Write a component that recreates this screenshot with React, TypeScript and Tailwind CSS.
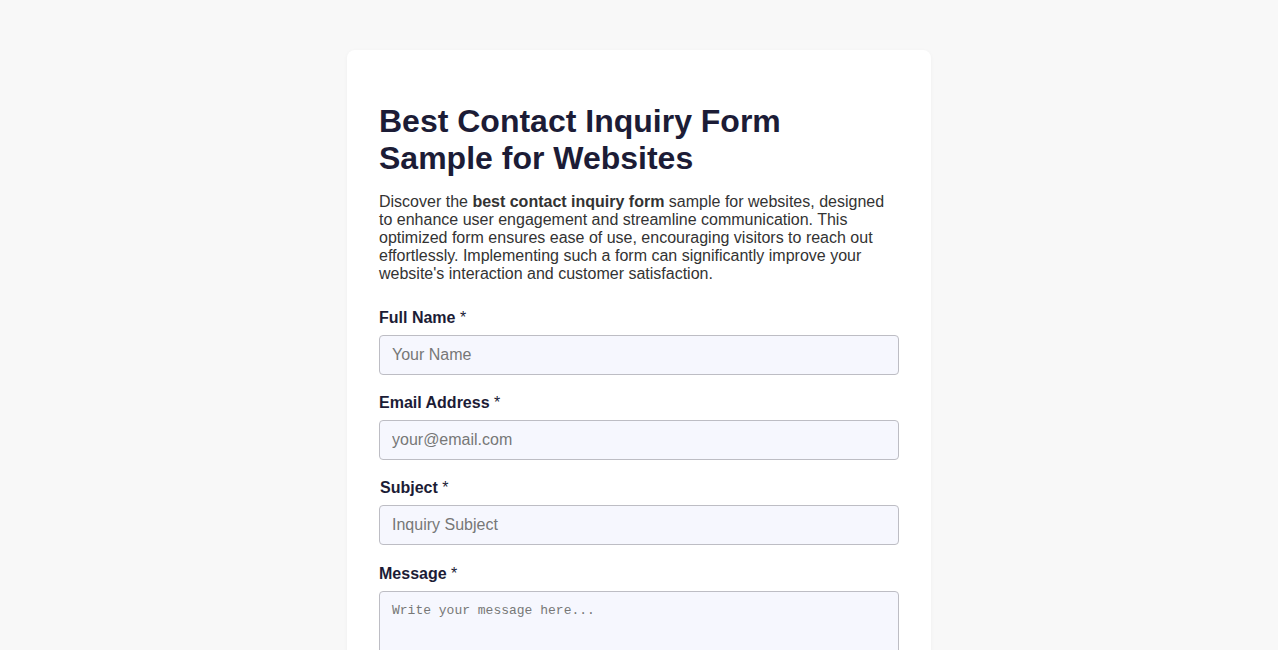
import React from "react";

const labelCls = "block text-[16px] font-bold text-[#1c1c36] leading-[18px] mb-[8px]";
const inputCls =
  "block w-full h-[40px] px-[12px] bg-[#f6f7fe] border border-[#bdbdc4] rounded-[4px] text-[16px] text-[#333] placeholder:text-[#777] outline-none";

function Req() {
  return <span className="font-normal"> *</span>;
}

export default function App() {
  return (
    <div
      className="min-h-screen bg-[#f8f8f8] flex justify-center pt-[50px]"
      style={{ fontFamily: '"Liberation Sans", Arial, sans-serif' }}
    >
      <div className="w-[584px] bg-white rounded-[8px] shadow-[0_1px_4px_rgba(0,0,0,0.04)] px-[32px] pt-[53px] pb-[40px] self-start">
        <h1 className="text-[32px] font-bold leading-[37px] text-[#1c1c36]">
          Best Contact Inquiry Form
          <br />
          Sample for Websites
        </h1>
        <p className="mt-[16px] text-[16px] leading-[18px] text-[#333]">
          Discover the <strong>best contact inquiry form</strong> sample for websites, designed to enhance user
          engagement and streamline communication. This optimized form ensures ease of use, encouraging visitors
          to reach out effortlessly. Implementing such a form can significantly improve your website's interaction
          and customer satisfaction.
        </p>
        <form className="mt-[26px] flex flex-col gap-[19px]">
          <div>
            <label className={labelCls}>
              Full Name<Req />
            </label>
            <input className={inputCls} placeholder="Your Name" />
          </div>
          <div>
            <label className={labelCls}>
              Email Address<Req />
            </label>
            <input className={inputCls} placeholder="your@email.com" />
          </div>
          <div>
            <label className={labelCls + " pl-[1px]"}>
              Subject<Req />
            </label>
            <input className={inputCls} placeholder="Inquiry Subject" />
          </div>
          <div className="mt-[1px]">
            <label className={labelCls}>
              Message<Req />
            </label>
            <textarea
              className="block w-full h-[120px] px-[12px] py-[11px] bg-[#f6f7fe] border border-[#bdbdc4] rounded-[4px] text-[13px] leading-[16px] text-[#333] placeholder:text-[#777] outline-none resize-none"
              style={{ fontFamily: '"Liberation Mono", "DejaVu Sans Mono", monospace' }}
              placeholder="Write your message here..."
            />
          </div>
        </form>
      </div>
    </div>
  );
}
